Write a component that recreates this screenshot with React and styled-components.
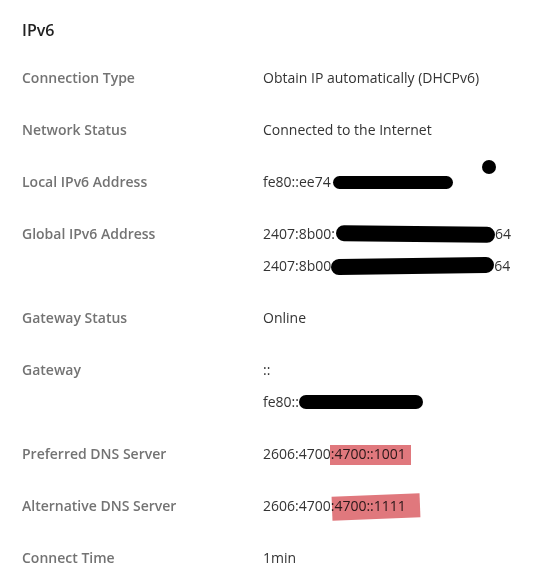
import React from "react";
import styled, { createGlobalStyle } from "styled-components";

const GlobalStyle = createGlobalStyle`
  body {
    margin: 0;
    background: #fff;
    font-family: "Open Sans", "Noto Sans", sans-serif;
  }
`;

const Panel = styled.div`
  padding: 18px 22px 0 22px;
`;

const Title = styled.h2`
  margin: 0 0 10px 0;
  font-size: 16px;
  line-height: 24px;
  font-weight: 600;
  color: #222;
`;

const Row = styled.div`
  display: grid;
  grid-template-columns: 241px 1fr;
  padding: 16px 0;
  font-size: 14px;
  line-height: 20px;
`;

const Label = styled.div`
  font-weight: 600;
  color: #737373;
`;

const Values = styled.div`
  display: flex;
  flex-direction: column;
  gap: 12px;
  color: #333;
`;

const Line = styled.div`
  position: relative;
  display: flex;
  align-items: center;
  white-space: nowrap;
`;

const Scribble = styled.span`
  display: inline-block;
  flex: none;
  width: ${(p) => p.$w}px;
  height: ${(p) => p.$h || 14}px;
  margin-left: ${(p) => p.$ml || 0}px;
  background: #000;
  border-radius: 8px;
  transform: rotate(${(p) => p.$rot || 0}deg);
`;

const Dot = styled.span`
  position: absolute;
  left: 219px;
  top: -12px;
  width: 14px;
  height: 14px;
  border-radius: 50%;
  background: #000;
`;

const Mark = styled.span`
  position: relative;
  &::after {
    content: "";
    position: absolute;
    left: ${(p) => p.$l}px;
    right: ${(p) => p.$r}px;
    top: ${(p) => p.$t}px;
    bottom: ${(p) => p.$b}px;
    background: #e0787d;
    mix-blend-mode: multiply;
    transform: rotate(${(p) => p.$rot || 0}deg);
  }
`;

const rows = [
  { label: "Connection Type", values: ["Obtain IP automatically (DHCPv6)"] },
  { label: "Network Status", values: ["Connected to the Internet"] },
  {
    label: "Local IPv6 Address",
    values: [
      <>
        fe80::ee74
        <Scribble $w={120} $h={13} $ml={2} />
        <Dot />
      </>,
    ],
  },
  {
    label: "Global IPv6 Address",
    values: [
      <>
        2407:8b00:
        <Scribble $w={159} $h={16} $ml={1} $rot={0.6} />
        64
      </>,
      <>
        2407:8b00
        <Scribble $w={163} $h={16} $ml={0} $rot={-0.8} />
        64
      </>,
    ],
  },
  { label: "Gateway Status", values: ["Online"] },
  {
    label: "Gateway",
    values: [
      "::",
      <>
        fe80::
        <Scribble $w={124} $h={14} />
      </>,
    ],
  },
  {
    label: "Preferred DNS Server",
    values: [
      <>
        2606:4700
        <Mark $l={-1} $r={-5} $t={1} $b={-1}>
          :4700::1001
        </Mark>
      </>,
    ],
  },
  {
    label: "Alternative DNS Server",
    values: [
      <>
        2606:4700
        <Mark $l={1} $r={-14} $t={-1} $b={-3} $rot={-2.2}>
          :4700::1111
        </Mark>
      </>,
    ],
  },
  { label: "Connect Time", values: ["1min"] },
];

const App = () => {
  return (
    <>
      <GlobalStyle />
      <Panel>
        <Title>IPv6</Title>
        {rows.map((row) => (
          <Row key={row.label}>
            <Label>{row.label}</Label>
            <Values>
              {row.values.map((v, i) => (
                <Line key={i}>{v}</Line>
              ))}
            </Values>
          </Row>
        ))}
      </Panel>
    </>
  );
};

export default App;
